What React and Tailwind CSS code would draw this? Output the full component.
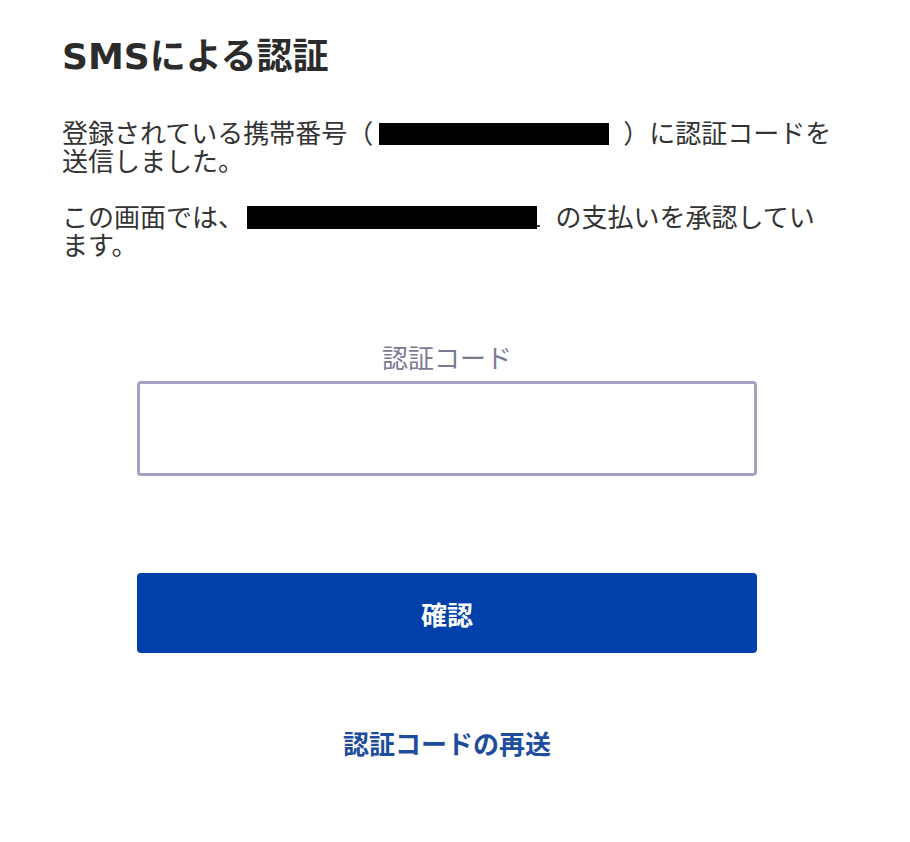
const BODY_FONT = "font-['Noto_Sans_CJK_JP','Noto_Sans',sans-serif]";
const TITLE_FONT = "font-['DejaVu_Sans','Noto_Sans_CJK_JP',sans-serif]";

const Redacted = ({ className }) => (
  <span className={`relative z-10 inline-block bg-black align-[-2px] ${className}`} />
);

export default function App() {
  return (
    <div className={`min-h-[842px] w-[910px] bg-white ${BODY_FONT} text-[#333333]`}>
      <div className="ml-[62px] w-[776px] pt-[34px]">
        <h1 className={`${TITLE_FONT} text-[36px] font-bold leading-[46px] text-[#2b2b2b]`}>SMSによる認証</h1>

        <p className="mt-[38px] text-[26px] leading-[28px]">
          登録されている携帯番号（
          <Redacted className="ml-[6px] mr-[14px] h-[22px] w-[230px]" />
          ）に認証コードを送信しました。
        </p>

        <p className="mt-[28px] text-[26px] leading-[28px]">
          この画面では、
          <Redacted className="ml-[3px] h-[23px] w-[290px]" />
          <span className="-ml-[10px] mr-[14px]">1</span>
          の支払いを承認しています。
        </p>

        <div className="ml-[75px] mt-[84px] flex w-[620px] flex-col items-center">
          <label className="text-[26px] leading-[30px] text-[#7c7a92]">認証コード</label>
          <input
            type="text"
            className="mt-[9px] h-[95px] w-full rounded-[4px] border-[3px] border-[#a3a2c2] bg-white px-4 text-[26px] outline-none"
          />
          <button className="mt-[97px] h-[80px] w-full rounded-[4px] bg-[#0040a8] text-[26px] font-bold text-white">
            確認
          </button>
          <a className="mt-[75px] text-[26px] font-bold leading-[30px] text-[#1f4d9e]">認証コードの再送</a>
        </div>
      </div>
    </div>
  );
}
